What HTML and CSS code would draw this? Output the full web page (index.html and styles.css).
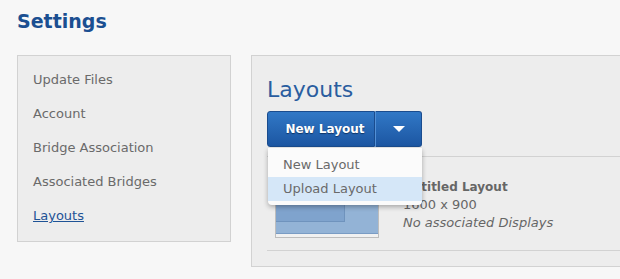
FILE: index.html
```html
<!DOCTYPE html>
<html lang="en">
<head>
    <meta charset="UTF-8">
    <meta name="viewport" content="width=device-width, initial-scale=1.0">
    <title>Settings</title>
    <link rel="stylesheet" href="styles.css">
</head>
<body>
    <div class="page">
        <h1 class="page-title">Settings</h1>
        <div class="columns">
            <ul class="side-nav">
                <li><a href="#">Update Files</a></li>
                <li><a href="#">Account</a></li>
                <li><a href="#">Bridge Association</a></li>
                <li><a href="#">Associated Bridges</a></li>
                <li><a href="#" class="active">Layouts</a></li>
            </ul>

            <div class="panel">
                <h2 class="panel-title">Layouts</h2>

                <div class="btn-group">
                    <button class="btn btn-main">New Layout</button>
                    <button class="btn btn-caret"><span class="caret"></span></button>
                    <ul class="dropdown">
                        <li>New Layout</li>
                        <li class="hover">Upload Layout</li>
                    </ul>
                </div>

                <div class="layout-row">
                    <div class="thumb">
                        <div class="thumb-fill">
                            <div class="thumb-inner"></div>
                        </div>
                    </div>
                    <div class="layout-info">
                        <div class="layout-name">Untitled Layout</div>
                        <div>1600 x 900</div>
                        <div class="layout-note">No associated Displays</div>
                    </div>
                </div>
            </div>
        </div>
    </div>
</body>
</html>
```

FILE: styles.css
```css
body {
    margin: 0;
    padding: 0;
    background-color: #f7f7f7;
    font-family: "DejaVu Sans", sans-serif;
    color: #666;
    overflow: hidden;
}

.page {
    padding: 8px 0 0 17px;
}

.page-title {
    margin: 0;
    font-size: 19px;
    line-height: 26px;
    font-weight: bold;
    color: #1b4f91;
}

.columns {
    display: flex;
    align-items: flex-start;
    gap: 20px;
    margin-top: 21px;
}

.side-nav {
    list-style: none;
    margin: 0;
    padding: 8px 0 10px 15px;
    width: 197px;
    height: 167px;
    background-color: #ededed;
    border: 1px solid #d2d2d2;
    flex-shrink: 0;
}

.side-nav li {
    height: 34px;
    line-height: 32px;
    font-size: 13px;
}

.side-nav a {
    color: #6a6a6a;
    text-decoration: none;
}

.side-nav a.active {
    color: #1f5396;
    text-decoration: underline;
}

/* runs off the right edge in the original, so no right border */
.panel {
    flex: 1;
    height: 210px;
    padding: 0 0 0 15px;
    background-color: #ededed;
    border: 1px solid #d2d2d2;
    border-right: none;
}

.panel-title {
    margin: 0;
    padding-top: 21px;
    font-size: 22px;
    line-height: 26px;
    font-weight: normal;
    color: #2a5d9f;
}

.btn-group {
    position: relative;
    display: flex;
    margin-top: 8px;
    width: 155px;
}

.btn {
    height: 36px;
    border: 1px solid #1a4c8e;
    background: linear-gradient(#3178c6, #1c56a2);
    color: #fff;
    font-family: "DejaVu Sans", sans-serif;
    font-weight: bold;
    font-size: 12px;
    text-shadow: 0 1px 1px #0f3566;
    cursor: pointer;
    padding: 0;
}

.btn-main {
    width: 108px;
    padding-left: 8px;
    border-radius: 3px 0 0 3px;
}

.btn-caret {
    width: 47px;
    border-left: 1px solid #5290d6;
    border-radius: 0 3px 3px 0;
    display: flex;
    align-items: center;
    justify-content: center;
}

.caret {
    width: 0;
    height: 0;
    border-left: 6px solid transparent;
    border-right: 6px solid transparent;
    border-top: 6px solid #fff;
}

.dropdown {
    position: absolute;
    top: 37px;
    left: 1px;
    width: 154px;
    margin: 0;
    padding: 5px 0 4px;
    list-style: none;
    background-color: #fbfbfb;
    border-radius: 0 0 4px 4px;
    box-shadow: 0 2px 5px rgba(0, 0, 0, 0.3);
    z-index: 2;
}

.dropdown li {
    height: 24px;
    line-height: 24px;
    padding-left: 15px;
    font-size: 13px;
    color: #6a6a6a;
}

.dropdown li.hover {
    background-color: #d5e7f8;
}

.layout-row {
    display: flex;
    gap: 24px;
    margin-top: 9px;
    padding: 12px 0 12px 8px;
    border-top: 1px solid #d2d2d2;
    border-bottom: 1px solid #d2d2d2;
}

.thumb {
    width: 102px;
    height: 68px;
    border: 1px solid #bdbdbd;
    border-top: none;
    background-color: #f1f1f1;
}

.thumb-fill {
    height: 64px;
    background-color: #93b3d6;
    border-bottom: 1px solid #7a9cc4;
}

.thumb-inner {
    width: 68px;
    height: 52px;
    background-color: #7fa3cd;
    border-right: 1px solid #6f93bd;
    border-bottom: 1px solid #6f93bd;
}

.layout-info {
    padding-top: 9px;
    font-size: 13px;
    line-height: 18px;
    color: #666;
}

.layout-name {
    font-weight: bold;
    font-size: 12px;
}

.layout-note {
    font-style: italic;
}
```
